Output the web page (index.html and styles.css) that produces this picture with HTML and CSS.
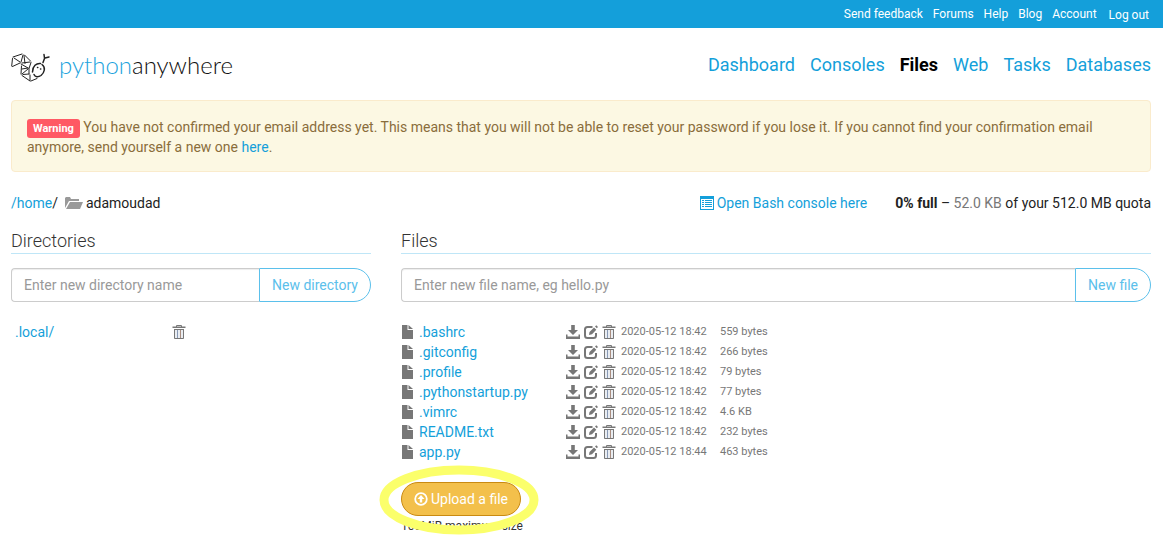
FILE: index.html
```html
<!DOCTYPE html>
<html lang="en">
<head>
<meta charset="utf-8">
<meta name="viewport" content="width=device-width, initial-scale=1">
<title>Files : adamoudad : PythonAnywhere</title>
<link rel="stylesheet" href="styles.css">
</head>
<body>
<svg class="sprite" aria-hidden="true">
  <symbol id="file" viewBox="0 0 14 14"><path d="M1 0H6.500v5H12v9H1zM7.500 0L12 4H7.500z"/></symbol>
  <symbol id="download" viewBox="0 0 14 14"><path d="M5.200 0h3.600v5H12L7 10 2 5h3.200zM0 9.500h1.500V11.500h11V9.500H14V14H0z"/></symbol>
  <symbol id="edit" viewBox="0 0 14 14"><path fill="none" stroke="currentColor" stroke-width="2" d="M8.500 2H3.500Q1 2 1 4.500v6q0 2.500 2.500 2.500h6q2.500 0 2.500-2.500V8"/><path d="M5 10l.5-3L10 2.500 12.300 4.800 8 9.200zM11 1.500L12.300.2l1.700 1.700-1.200 1.400z"/></symbol>
  <symbol id="trash" viewBox="0 0 14 16"><path fill="none" stroke="currentColor" d="M4.500 3V1.500h5V3"/><path d="M.5 2.500h13V4H.5z"/><path fill="#e9edf2" d="M2 5h10v10H2z"/><path fill="none" stroke="currentColor" d="M2 5.500h10M2.500 5v9.500h9V5"/><path fill="none" stroke="#8899b5" d="M5.500 6v8"/><path fill="none" stroke="#a98d80" d="M8.500 6v8"/></symbol>
  <symbol id="folder" viewBox="0 0 18 14"><path d="M0 12V2l1-1h4l1 2h8v2H4zM5 6h13l-3 7H1z"/></symbol>
  <symbol id="console" viewBox="0 0 14 14"><path fill-rule="evenodd" d="M0 0h14v14H0zM1 3v10h12V3z"/><path d="M2 4h2v1H2zM5 4h7v1H5zM2 6h2v1H2zM5 6h7v1H5zM2 8h2v1H2zM5 8h7v1H5zM2 10h2v1H2zM5 10h7v1H5z"/></symbol>
  <symbol id="upload" viewBox="0 0 14 14"><circle cx="7" cy="7" r="5.800" fill="none" stroke="currentColor" stroke-width="1.800"/><path d="M7 3l3.500 4H8.200v3.500H5.800V7H3.500z"/></symbol>
</svg>

<nav class="topbar" aria-label="Account">
  <a href="#">Send feedback</a><a href="#">Forums</a><a href="#">Help</a><a href="#">Blog</a><a href="#">Account</a><button class="logout" type="button">Log out</button>
</nav>

<div class="page">
  <header class="header">
    <a class="brand" href="#">
      <svg class="snake" viewBox="0 0 40 30" aria-hidden="true">
        <path d="M2 5L11 2M1.500 6.500L.7 14M3 6l6 4M1.500 14.500L9 11M12 3l-2 7M13.500 3l6 6M13 3.500l1 8M11 11l8-1M10 12l7 4M20 10.500l-2 6M10.500 14l-.5 8M17 16l-6 1M18 17v5M11 22l6-5M11 23.500l8 5.500M12 22.500l6-.5M19 23v5.500M20 29l6-2.500"/>
        <path class="face" d="M21.500 20c0-6 4-9 8-8.500M31 12.500c4 3 2.500 8-1 11-3 2-6 1.500-7-1M32 10.500l1.500-4M33.500 6L33 2.500M34 6l4-1"/>
        <path class="face" d="M26.500 15.500h.3M29.500 17h.3"/>
      </svg>
      <span class="wordmark"><span class="python">python</span>anywhere</span>
    </a>
    <nav class="tabs" aria-label="Main">
      <a href="#">Dashboard</a><a href="#">Consoles</a><a class="active" href="#" aria-current="page">Files</a><a href="#">Web</a><a href="#">Tasks</a><a href="#">Databases</a>
    </nav>
  </header>

  <div class="alert"><span class="label">Warning</span> You have not confirmed your email address yet. This means that you will not be able to reset your password if you lose it. If you cannot find your confirmation email anymore, send yourself a new one <a href="#">here</a>.</div>

  <div class="pathbar">
    <div class="crumbs"><span><a href="#">/home</a>/</span><svg class="icon-folder" aria-hidden="true"><use href="#folder"/></svg><span>adamoudad</span></div>
    <div class="status">
      <a class="console" href="#"><svg class="icon" aria-hidden="true"><use href="#console"/></svg>Open Bash console here</a>
      <span><b>0% full</b> – <span class="muted">52.0 KB</span> of your 512.0 MB quota</span>
    </div>
  </div>

  <main class="columns">
    <section>
      <h2>Directories</h2>
      <form class="create">
        <input type="text" aria-label="New directory name" placeholder="Enter new directory name">
        <button type="button">New directory</button>
      </form>
      <table class="listing dirs">
        <tbody><tr><td class="dirname"><a href="#">.local/</a></td><td><button class="act" type="button" aria-label="Delete .local"><svg class="icon-trash"><use href="#trash"/></svg></button></td></tr></tbody>
      </table>
    </section>

    <section>
      <h2>Files</h2>
      <form class="create">
        <input type="text" aria-label="New file name" placeholder="Enter new file name, eg hello.py">
        <button type="button">New file</button>
      </form>
      <table class="listing">
        <tbody id="files"></tbody>
      </table>
      <div class="upload">
        <button class="upload-button" type="button"><svg class="icon" aria-hidden="true"><use href="#upload"/></svg>Upload a file</button>
        <div class="limit">100MiB maximum size</div>
        <svg class="ring" viewBox="0 0 160 70" aria-hidden="true"><ellipse cx="80" cy="35" rx="75" ry="30"/></svg>
      </div>
    </section>
  </main>
</div>
<script src="files.js"></script>
</body>
</html>
```
FILE: styles.css
```css
* { box-sizing: border-box; }
body { margin: 0; background: #fff; color: #333; font: 14px/20px Roboto, sans-serif; }
a { color: #149fda; text-decoration: none; }
button, input { font: inherit; }
button { cursor: pointer; }
svg { fill: currentColor; }
.sprite { position: absolute; width: 0; height: 0; }
.icon { width: 14px; height: 14px; }

.topbar { display: flex; justify-content: flex-end; gap: 10px; height: 28px; padding: 4px 14px 0 0; background: #149fda; font-size: 12px; }
.topbar a, .logout { color: #fff; }
.logout { height: 22px; margin-left: 2px; padding: 0; border: 0; background: none; }

.page { padding: 0 12px 0 11px; }
.header { display: flex; justify-content: space-between; align-items: center; height: 72px; padding-top: 2px; }
.brand { display: flex; align-items: flex-start; gap: 8px; padding-top: 4px; }
.snake { width: 40px; height: 30px; fill: none; stroke: #222; stroke-width: 1; stroke-linecap: round; }
.face { stroke-width: 1.5; }
.wordmark { color: #111; font: 300 24px/26px Lato, sans-serif; }
.python { color: #1ca3dd; }
.tabs { display: flex; gap: 15px; font-size: 18px; line-height: 26px; }
.tabs .active { color: #000; font-weight: 700; }

.alert { padding: 16px 15px 14px; border: 1px solid #faebcc; border-radius: 4px; background: #fcf8e3; color: #8a6d3b; }
.label { padding: 3px 6px; border-radius: 3px; background: #ff5964; color: #fff; font-size: 11px; font-weight: 700; line-height: 12px; }

.pathbar { display: flex; justify-content: space-between; padding: 21px 0 18px; }
.crumbs { display: flex; align-items: center; gap: 3px; color: #222; }
.icon-folder { width: 18px; height: 14px; margin-left: 4px; color: #999; }
.status { display: flex; gap: 28px; color: #222; }
.console { display: flex; align-items: center; gap: 3px; }
.muted { color: #777; }

.columns { display: grid; grid-template-columns: 12fr 25fr; gap: 30px; }
h2 { margin: 0 0 14px; padding-bottom: 2px; border-bottom: 1px solid #bfe6f7; color: #333; font-size: 18px; font-weight: 300; line-height: 20px; }
.create { display: flex; margin-bottom: 20px; }
.create input { flex: 1; min-width: 0; height: 34px; padding: 6px 12px; border: 1px solid #ccc; border-right: 0; border-radius: 4px 0 0 4px; box-shadow: inset 0 1px 1px rgba(0, 0, 0, .075); }
.create input::placeholder { color: #999; opacity: 1; }
.create button { padding: 6px 12px; border: 1px solid #5bc0eb; border-radius: 0 17px 17px 0; background: #fff; color: #5bc0eb; }

.listing { border-collapse: collapse; }
.listing td { height: 20px; padding: 0; }
.name { width: 165px; }
.name a, .actions { display: flex; align-items: center; }
.name a { gap: 4px; }
.name svg { color: #777; }
.actions { gap: 4px; width: 55px; }
.act { display: flex; padding: 0; border: 0; background: none; color: #777; }
.icon-trash { width: 14px; height: 16px; }
.date, .size { color: #777; font-size: 11px; }
.date { width: 99px; }
.dirname { width: 161px; }
.dirs .dirname { padding-left: 4px; }

.upload { position: relative; padding-top: 20px; }
.upload-button { display: flex; align-items: center; gap: 3px; height: 34px; padding: 6px 12px; border: 1px solid #c98a12; border-radius: 17px; background: #f3c04b; color: #fff; }
.limit { color: #333; font-size: 12px; line-height: 20px; }
.ring { position: absolute; top: 3px; left: -22px; width: 160px; height: 70px; fill: none; stroke: #fbff6b; stroke-width: 9; pointer-events: none; }
```
FILE: files.js
```js
const files = [
  [".bashrc", "2020-05-12 18:42", "559 bytes"],
  [".gitconfig", "2020-05-12 18:42", "266 bytes"],
  [".profile", "2020-05-12 18:42", "79 bytes"],
  [".pythonstartup.py", "2020-05-12 18:42", "77 bytes"],
  [".vimrc", "2020-05-12 18:42", "4.6 KB"],
  ["README.txt", "2020-05-12 18:42", "232 bytes"],
  ["app.py", "2020-05-12 18:44", "463 bytes"]
];
const action = (label, icon, name) =>
  `<button class="act" type="button" aria-label="${label} ${name}"><svg class="${icon === "trash" ? "icon-trash" : "icon"}"><use href="#${icon}"/></svg></button>`;
document.getElementById("files").innerHTML = files.map(([name, date, size]) => `
  <tr>
    <td class="name"><a href="#"><svg class="icon" aria-hidden="true"><use href="#file"/></svg>${name}</a></td>
    <td><div class="actions">${action("Download", "download", name)}${action("Edit", "edit", name)}${action("Delete", "trash", name)}</div></td>
    <td class="date">${date}</td>
    <td class="size">${size}</td>
  </tr>`).join("");
```
